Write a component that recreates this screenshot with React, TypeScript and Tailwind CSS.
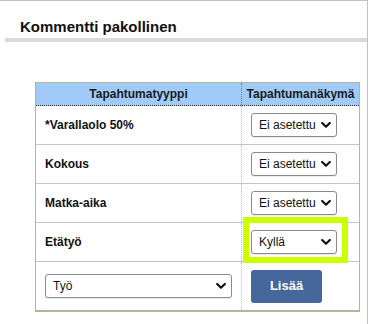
import React from "react";

const Chevron = () => (
  <svg width="10" height="7" viewBox="0 0 10 7" className="absolute right-[5px] top-1/2 -translate-y-1/2 pointer-events-none">
    <polyline points="1.2,1.5 5,5.2 8.8,1.5" fill="none" stroke="#111" strokeWidth="2.2" strokeLinecap="round" strokeLinejoin="round" />
  </svg>
);

function Select({ value, width }: { value: string; width: string }) {
  return (
    <div className={`relative h-[24px] ${width} rounded-[3px] border border-[#8a8a8a] bg-white shadow-[0_1px_1px_rgba(0,0,0,0.08)] flex items-center pl-[7px] text-[12px] text-[#111]`}>
      <span>{value}</span>
      <Chevron />
    </div>
  );
}

const rows = [
  { label: "*Varallaolo 50%", value: "Ei asetettu" },
  { label: "Kokous", value: "Ei asetettu" },
  { label: "Matka-aika", value: "Ei asetettu" },
];

export default function App() {
  return (
    <div className="w-[370px] h-[324px] bg-white" style={{ fontFamily: '"Liberation Sans", Arial, sans-serif' }}>
      <div className="w-[368px] h-[324px] border-t border-r border-[#c2c2c2] bg-[#fefefe]">
        <div className="pt-[18px] pl-[20px] text-[15px] leading-[15px] font-bold text-[#111]">Kommentti pakollinen</div>
        <div className="mt-[4px] ml-[5px] h-[4px] bg-[#dadada]" />
        <div className="mt-[40px] ml-[35px] w-[325px] border border-b-2 border-[#bab395] bg-white">
          <div className="flex h-[23px] bg-[#a0cbf8] border-b border-dotted border-[#333] text-[12px] font-bold text-[#1a1a1a]">
            <div className="w-[206px] border-r border-dotted border-[#5a7fa8] flex items-center justify-center">Tapahtumatyyppi</div>
            <div className="flex-1 flex items-center justify-center">Tapahtumanäkymä</div>
          </div>
          {rows.map((r) => (
            <div key={r.label} className="flex h-[39px] border-b border-[#c4c4c4]">
              <div className="w-[206px] border-r border-dotted border-[#bdbdbd] flex items-center pl-[9px] text-[12px] font-bold text-[#111]">{r.label}</div>
              <div className="flex-1 flex items-center pl-[9px]">
                <Select value={r.value} width="w-[86px]" />
              </div>
            </div>
          ))}
          <div className="flex h-[39px] border-b border-[#c4c4c4]">
            <div className="w-[206px] border-r border-dotted border-[#bdbdbd] flex items-center pl-[9px] text-[12px] font-bold text-[#111]">Etätyö</div>
            <div className="relative flex-1 flex items-center pl-[9px]">
              <div className="absolute left-[1px] top-[-6px] w-[105px] h-[46px] border-[6px] border-[#ccff00]" />
              <Select value="Kyllä" width="w-[86px]" />
            </div>
          </div>
          <div className="flex h-[48px]">
            <div className="w-[206px] border-r border-dotted border-[#bdbdbd] flex items-center pl-[9px]">
              <Select value="Työ" width="w-[187px]" />
            </div>
            <div className="flex-1 flex items-center pl-[9px]">
              <button className="w-[71px] h-[33px] rounded-[3px] bg-[#45679b] text-white text-[13px] font-bold">Lisää</button>
            </div>
          </div>
        </div>
      </div>
    </div>
  );
}
